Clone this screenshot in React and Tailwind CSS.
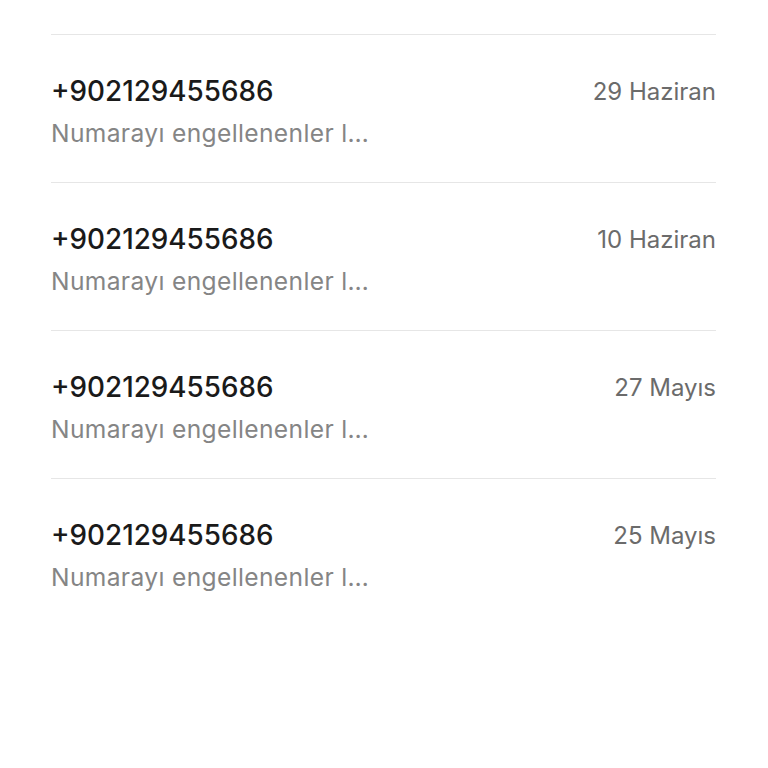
const calls = [
  { id: 1, number: "+902129455686", note: "Numarayı engellenenler l…", date: "29 Haziran" },
  { id: 2, number: "+902129455686", note: "Numarayı engellenenler l…", date: "10 Haziran" },
  { id: 3, number: "+902129455686", note: "Numarayı engellenenler l…", date: "27 Mayıs" },
  { id: 4, number: "+902129455686", note: "Numarayı engellenenler l…", date: "25 Mayıs" },
];

export default function App() {
  return (
    <div
      className="min-h-screen bg-white pt-[34px] pl-[51px] pr-[52px]"
      style={{ fontFamily: 'Inter, "Noto Sans", sans-serif' }}
    >
      {calls.map((c) => (
        <div key={c.id} className="h-[148px] border-t border-[#e6e6e6] pt-[38px]">
          <div className="flex justify-between items-center h-[38px]">
            <span className="text-[27.8px] leading-normal font-[450] text-[#1a1a1a]">{c.number}</span>
            <span className="text-[24px] leading-normal text-[#6b6b6b]">{c.date}</span>
          </div>
          <div className="mt-[5px] h-[34px] flex items-center">
            <span className="whitespace-nowrap text-[24.6px] tracking-[0.35px] leading-normal text-[#858585]">
              {c.note}
            </span>
          </div>
        </div>
      ))}
    </div>
  );
}
